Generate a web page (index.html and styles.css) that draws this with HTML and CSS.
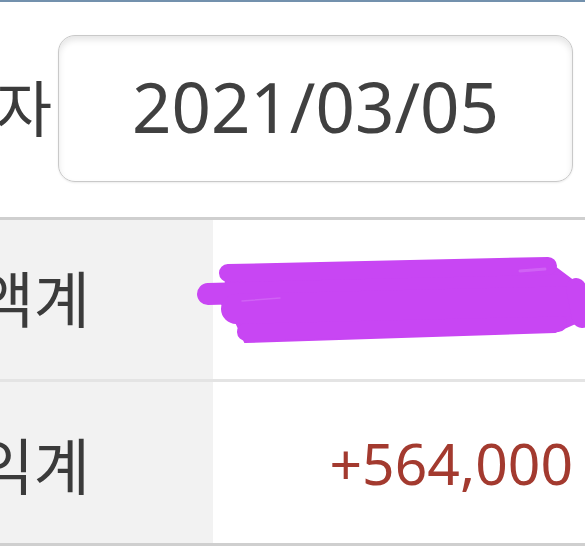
FILE: index.html
```html
<!DOCTYPE html>
<html lang="ko">
<head>
<meta charset="utf-8">
<link rel="stylesheet" href="styles.css">
</head>
<body>
<div class="page">
  <div class="date-row">
    <div class="label-box"><span class="label">거래일자</span></div>
    <div class="date-input">2021/03/05</div>
  </div>
  <div class="table">
    <div class="row row-1">
      <div class="head"><div class="head-text">평가금액계</div></div>
      <div class="cell"></div>
    </div>
    <div class="row row-2">
      <div class="head"><div class="head-text">평가손익계</div></div>
      <div class="cell"><span class="profit">+564,000</span></div>
    </div>
  </div>
  <svg class="scribble" viewBox="0 0 585 546" width="585" height="546" aria-hidden="true">
    <g fill="#c846f3" stroke="#c846f3" stroke-linecap="round" stroke-linejoin="round">
      <polygon points="228,270 548,262 572,280 582,320 555,332 245,342 236,322 222,304" stroke-width="2"/>
      <line x1="208" y1="294" x2="560" y2="285" stroke-width="22"/>
      <line x1="228" y1="273" x2="548" y2="266" stroke-width="18"/>
      <line x1="246" y1="332" x2="558" y2="323" stroke-width="18"/>
      <line x1="236" y1="309" x2="578" y2="301" stroke-width="30"/>
      <line x1="576" y1="288" x2="582" y2="318" stroke-width="20"/>
    </g>
    <g stroke="#d36cf5" stroke-linecap="round" fill="none" opacity="0.7">
      <line x1="242" y1="301" x2="280" y2="298" stroke-width="1.5"/>
      <line x1="520" y1="271" x2="545" y2="269" stroke-width="3"/>
    </g>
  </svg>
</div>
</body>
</html>
```

FILE: styles.css
```css
html, body {
  margin: 0;
  padding: 0;
  background: #ffffff;
}

body {
  font-family: "Noto Sans", "Noto Sans CJK KR", sans-serif;
  width: 585px;
  height: 546px;
  overflow: hidden;
}

.page {
  position: relative;
  width: 585px;
  height: 546px;
  border-top: 2px solid #7391ad;
  box-sizing: border-box;
  overflow: hidden;
}

.date-row {
  display: flex;
  align-items: center;
  height: 215px;
  box-sizing: border-box;
  padding-top: 33px;
  padding-bottom: 35px;
}

.label-box {
  width: 58px;
  flex: none;
  display: flex;
  justify-content: flex-end;
  padding-right: 6px;
  box-sizing: border-box;
}

.label {
  white-space: nowrap;
  font-size: 61px;
  color: #3b3b3b;
  line-height: 1;
}

.date-input {
  width: 515px;
  height: 147px;
  box-sizing: border-box;
  border: 1px solid #c9c9c9;
  border-radius: 17px;
  box-shadow: inset 0 4px 6px rgba(0, 0, 0, 0.10), 0 1px 2px rgba(0, 0, 0, 0.08);
  display: flex;
  align-items: center;
  justify-content: center;
  font-size: 69px;
  color: #404040;
  line-height: 1;
  padding-bottom: 4px;
}

.table {
  border-top: 3px solid #cfcfcf;
  border-bottom: 3px solid #cfcfcf;
}

.row {
  display: flex;
}

.row-1 {
  height: 159px;
  border-bottom: 3px solid #e4e4e4;
}

.row-2 {
  height: 161px;
}

.head {
  width: 213px;
  flex: none;
  background: #f2f2f2;
  display: flex;
  align-items: center;
}

.head-text {
  width: 90px;
  display: flex;
  justify-content: flex-end;
  white-space: nowrap;
  font-size: 61px;
  color: #3b3b3b;
  line-height: 1;
}

.row-2 .head-text {
  padding-top: 8px;
}

.cell {
  flex: 1;
  display: flex;
  align-items: center;
  justify-content: flex-end;
  padding-right: 12px;
}

.profit {
  font-size: 57px;
  color: #a33a2f;
  line-height: 1;
  padding-top: 2px;
}

.scribble {
  position: absolute;
  left: 0;
  top: -2px;
  pointer-events: none;
}
```
